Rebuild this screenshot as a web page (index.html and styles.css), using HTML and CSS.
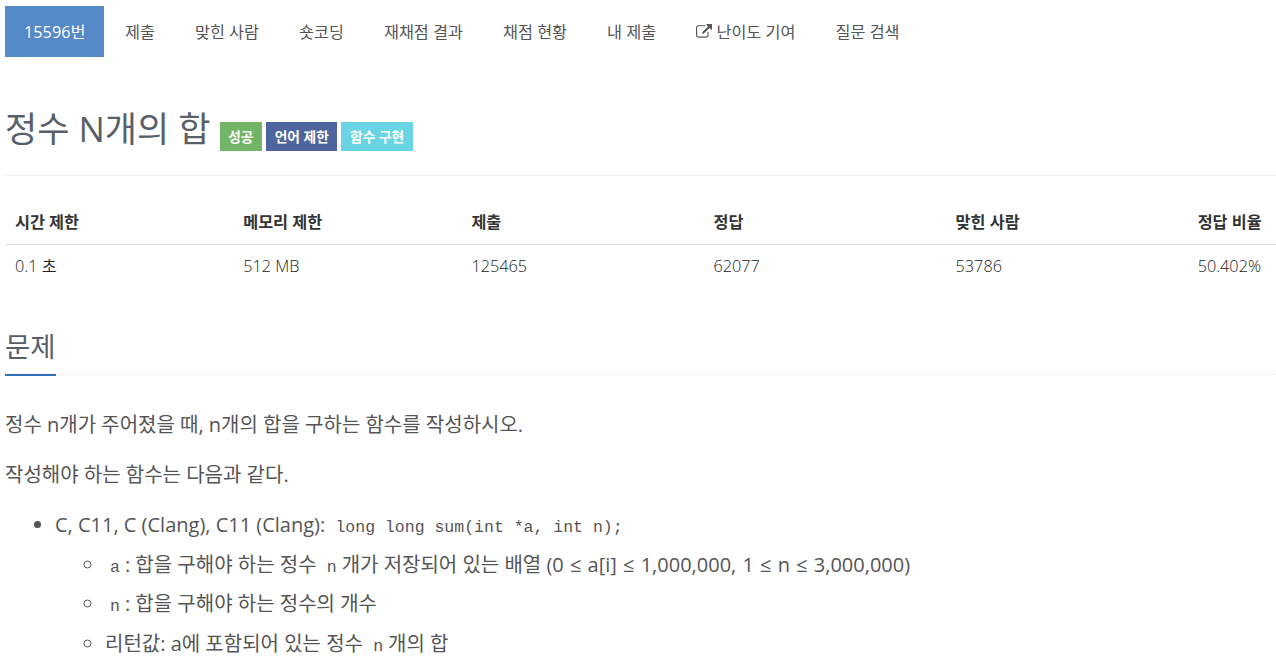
FILE: index.html
```
<!DOCTYPE html>
<html lang="ko">
<head>
  <meta charset="UTF-8">
  <title>15596번: 정수 N개의 합</title>
  <link rel="stylesheet" href="styles.css">
</head>
<body>
  <ul class="problem-menu">
    <li class="active"><a>15596번</a></li>
    <li><a>제출</a></li>
    <li><a>맞힌 사람</a></li>
    <li><a>숏코딩</a></li>
    <li><a>재채점 결과</a></li>
    <li><a>채점 현황</a></li>
    <li><a>내 제출</a></li>
    <li><a><svg class="icon" viewBox="0 0 1792 1792"><path fill="currentColor" d="M1408 928v320q0 119-84.500 203.500T1120 1536H288q-119 0-203.500-84.500T0 1248V416q0-119 84.500-203.500T288 128h704q14 0 23 9t9 23v64q0 14-9 23t-23 9H288q-66 0-113 47t-47 113v832q0 66 47 113t113 47h832q66 0 113-47t47-113V928q0-14 9-23t23-9h64q14 0 23 9t9 23zM1792 64v512q0 26-19 45t-45 19-45-19l-176-176-652 652q-10 10-23 10t-23-10L695 983q-10-10-10-23t10-23l652-652-176-176q-19-19-19-45t19-45 45-19h512q26 0 45 19t19 45z"/></svg> 난이도 기여</a></li>
    <li><a>질문 검색</a></li>
  </ul>

  <div class="page-header">
    <h1>정수 N개의 합</h1>
    <div class="labels">
      <span class="label label-success">성공</span>
      <span class="label label-language">언어 제한</span>
      <span class="label label-function">함수 구현</span>
    </div>
  </div>

  <table class="table">
    <thead>
      <tr>
        <th class="col-limit">시간 제한</th>
        <th class="col-limit">메모리 제한</th>
        <th class="col-count">제출</th>
        <th class="col-count">정답</th>
        <th class="col-count">맞힌 사람</th>
        <th>정답 비율</th>
      </tr>
    </thead>
    <tbody>
      <tr>
        <td>0.1 초</td>
        <td>512 MB</td>
        <td>125465</td>
        <td>62077</td>
        <td>53786</td>
        <td>50.402%</td>
      </tr>
    </tbody>
  </table>

  <div class="headline">
    <h2>문제</h2>
  </div>

  <div class="problem-text">
    <p>정수 n개가 주어졌을 때, n개의 합을 구하는 함수를 작성하시오.</p>
    <p>작성해야 하는 함수는 다음과 같다.</p>
    <ul>
      <li>C, C11, C (Clang), C11 (Clang): <code>long long sum(int *a, int n);</code>
        <ul>
          <li><code>a</code>: 합을 구해야 하는 정수 <code>n</code>개가 저장되어 있는 배열 <span class="range">(0 ≤ a[i] ≤ 1,000,000, 1 ≤ n ≤ 3,000,000)</span></li>
          <li><code>n</code>: 합을 구해야 하는 정수의 개수</li>
          <li>리턴값: a에 포함되어 있는 정수 <code>n</code>개의 합</li>
        </ul>
      </li>
    </ul>
  </div>
</body>
</html>
```
FILE: styles.css
```
* {
  box-sizing: border-box;
}
body {
  margin: 0;
  padding: 6px 0 0 5px;
  height: 660px;
  overflow: hidden;
  background: #fff;
  color: #333;
  font-family: "Open Sans", "Noto Sans CJK KR", sans-serif;
  font-size: 16.250px;
}
.problem-menu {
  display: flex;
  gap: 2px;
  height: 51px;
  margin: 0;
  padding: 0;
  list-style: none;
}
.problem-menu a {
  display: block;
  padding: 0 19px;
  font-size: 16.270px;
  line-height: 52px;
  color: #555;
  white-space: nowrap;
}
.problem-menu .active a {
  width: 99px;
  height: 51px;
  background: #5589c7;
  color: #fff;
}
.icon {
  width: 16px;
  height: 16px;
  vertical-align: -2px;
}
.page-header {
  display: flex;
  align-items: flex-start;
  gap: 9px;
  height: 119px;
  padding-top: 48px;
  border-bottom: 1px solid #eee;
}
h1 {
  margin: 0;
  font-size: 35px;
  font-weight: 370;
  line-height: 48px;
  color: #585f69;
  white-space: nowrap;
}
.labels {
  display: flex;
  gap: 4px;
  margin-top: 17px;
}
.label {
  height: 29px;
  padding: 0 8.600px;
  font-size: 13.750px;
  font-weight: 600;
  line-height: 29px;
  color: #fff;
  white-space: nowrap;
}
.label-success {
  background: #72b566;
}
.label-language {
  background: #4e659e;
}
.label-function {
  background: #69d5e4;
}
.table {
  width: 1271px;
  margin-top: 23px;
  border-collapse: collapse;
  table-layout: fixed;
}
.table th,
.table td {
  height: 44px;
  padding: 0 10px;
  line-height: 24px;
  text-align: left;
  white-space: nowrap;
}
.table th {
  height: 45px;
  padding-top: 1px;
  border-bottom: 1px solid #ddd;
}
.table td {
  color: #222;
  font-weight: 350;
}
.col-limit {
  width: 228.200px;
}
.col-count {
  width: 242.100px;
}
.headline {
  height: 50px;
  margin-top: 37px;
  border-bottom: 1px dotted #e4e9f0;
}
.headline h2 {
  display: inline-block;
  height: 51px;
  margin: 0;
  border-bottom: 2px solid #3071b9;
  font-size: 27.500px;
  font-weight: 370;
  line-height: 43px;
  color: #585f69;
}
.problem-text {
  padding-top: 35px;
  font-size: 20px;
  font-weight: 370;
  line-height: 30px;
  color: #555;
}
.problem-text p {
  margin: 0 0 20px;
}
.problem-text ul {
  margin: 0;
  padding-left: 50px;
}
.problem-text li {
  height: 39.300px;
  white-space: nowrap;
}
.problem-text ul ul {
  padding-top: 7px;
}
.range {
  word-spacing: 1px;
}
code {
  padding: 2px 5px;
  font-family: "Liberation Mono", monospace;
  font-size: 16.500px;
}
```
